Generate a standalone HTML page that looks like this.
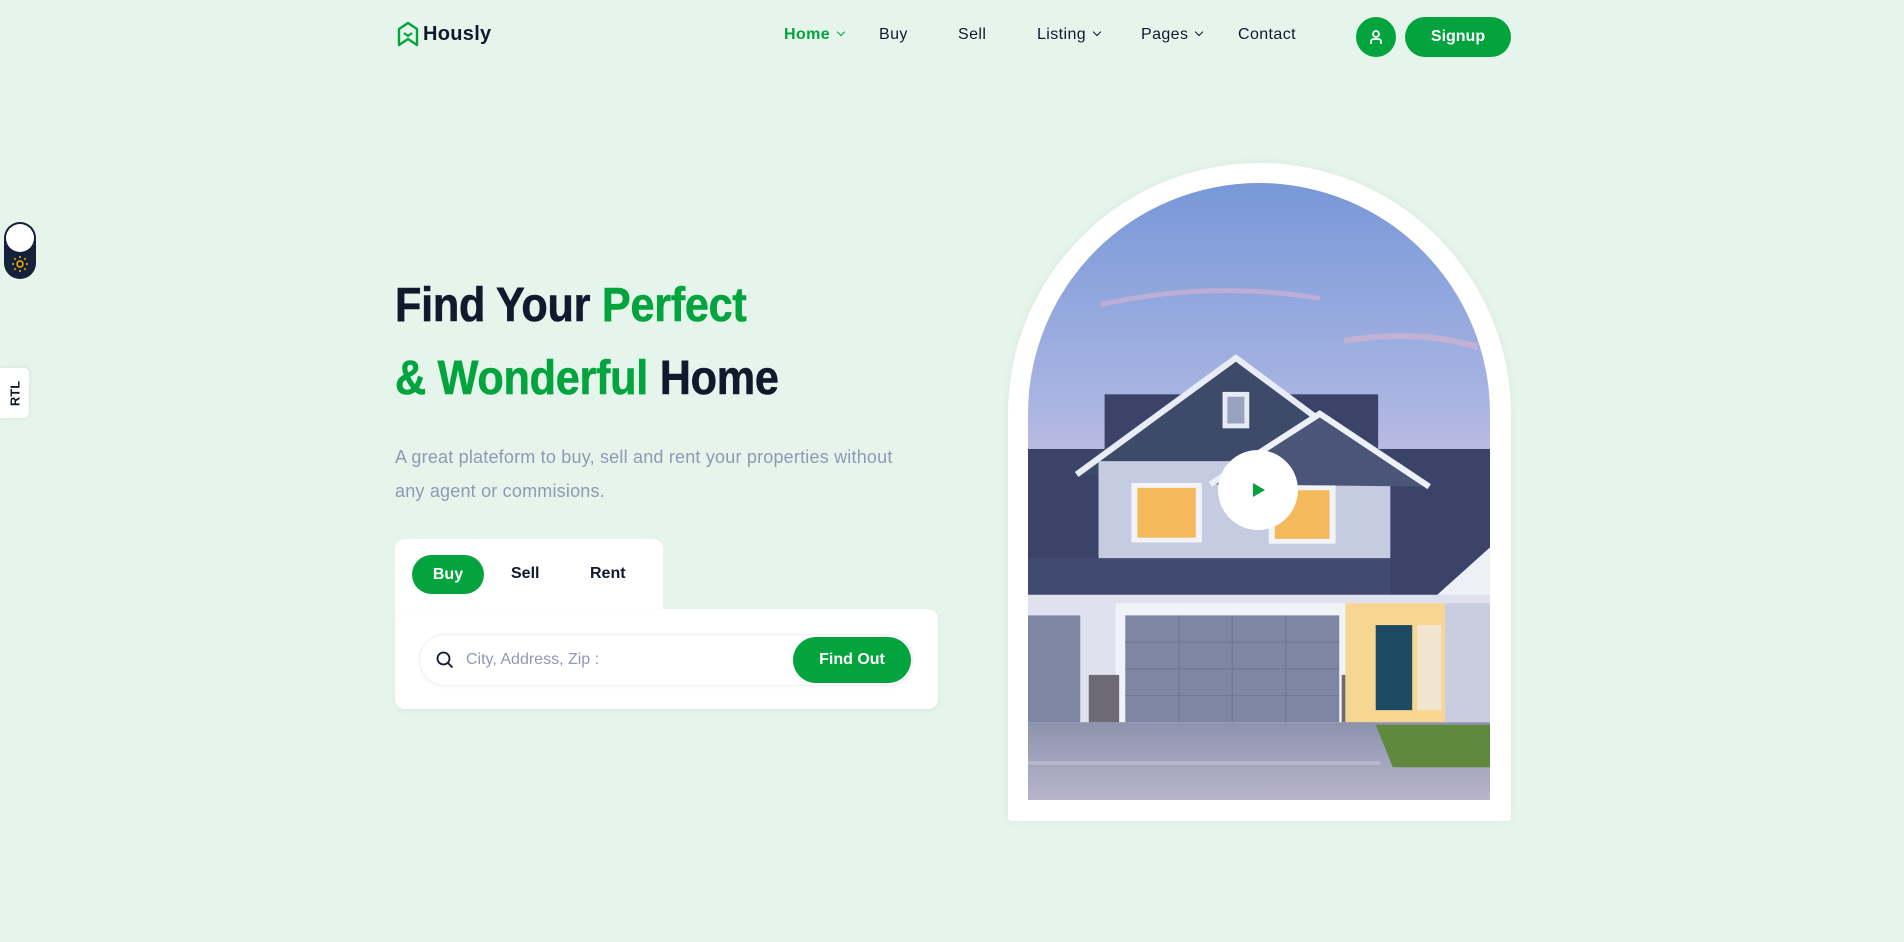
<!DOCTYPE html>
<html><head><meta charset="utf-8"><style>
*{margin:0;padding:0;box-sizing:border-box}
body{width:1904px;height:942px;background:#e5f5ec;font-family:"Liberation Sans",sans-serif;position:relative;overflow:hidden;color:#0f1a2e}
.abs{position:absolute}
.nav a{position:absolute;top:26px;font-size:16px;color:#0f1a2e;text-decoration:none;letter-spacing:.4px}
.chev{display:inline-block;width:6px;height:6px;border-right:1.6px solid currentColor;border-bottom:1.6px solid currentColor;transform:rotate(45deg);margin-left:8px;position:relative;top:-4px}
h1{position:absolute;left:395px;font-size:48px;font-weight:700;transform:scaleX(.9);transform-origin:left;white-space:nowrap;letter-spacing:-.3px;-webkit-text-stroke:.6px currentColor}
.g{color:#03a43d}
</style></head><body>
<svg class="abs" style="left:397px;top:21px" width="22" height="26" viewBox="0 0 22 26"><path d="M11 2 L20 8 V24 L11 18 L2 24 V8 Z" fill="none" stroke="#03a43d" stroke-width="2.4" stroke-linejoin="round"/><path d="M7 12 L11 15 L15 12" fill="none" stroke="#03a43d" stroke-width="2.2"/></svg>
<div class="abs" style="left:423px;top:23px;font-size:20px;font-weight:700;letter-spacing:.3px">Hously</div>
<div class="nav">
<a style="left:784px;color:#03a43d;font-weight:700">Home<span class="chev"></span></a>
<a style="left:879px">Buy</a>
<a style="left:958px">Sell</a>
<a style="left:1037px">Listing<span class="chev"></span></a>
<a style="left:1141px">Pages<span class="chev"></span></a>
<a style="left:1238px">Contact</a>
</div>
<div class="abs" style="left:1356px;top:17px;width:40px;height:40px;border-radius:50%;background:#03a43d"></div>
<svg class="abs" style="left:1369px;top:29px" width="14" height="16" viewBox="0 0 14 16"><circle cx="7" cy="5" r="3" fill="none" stroke="#fff" stroke-width="1.8"/><path d="M2 15 V13 Q2 10 5 10 H9 Q12 10 12 13 V15" fill="none" stroke="#fff" stroke-width="1.8"/></svg>
<div class="abs" style="left:1405px;top:17px;width:106px;height:40px;border-radius:20px;background:#03a43d;color:#fff;font-weight:700;font-size:16px;text-align:center;line-height:40px">Signup</div>

<div class="abs" style="left:4px;top:222px;width:32px;height:57px;border-radius:16px;background:#15203a"></div>
<div class="abs" style="left:6px;top:224px;width:28px;height:28px;border-radius:50%;background:#fff"></div>
<svg class="abs" style="left:12px;top:256px" width="16" height="16" viewBox="0 0 16 16"><circle cx="8" cy="8" r="3" fill="none" stroke="#f5b400" stroke-width="1.5"/><g stroke="#f5b400" stroke-width="1.5"><path d="M8 0v2M8 14v2M0 8h2M14 8h2M2.3 2.3l1.4 1.4M12.3 12.3l1.4 1.4M2.3 13.7l1.4-1.4M12.3 3.7l1.4-1.4"/></g></svg>
<div class="abs" style="left:0;top:368px;width:29px;height:50px;background:#fff;border-radius:0 6px 6px 0;box-shadow:0 0 6px rgba(0,0,0,.08)"></div>
<div class="abs" style="left:1px;top:386px;font-size:13px;font-weight:700;transform:rotate(-90deg);transform-origin:center;width:28px;text-align:center">RTL</div>

<h1 style="top:278px">Find Your <span class="g">Perfect</span></h1>
<h1 style="top:351px"><span class="g">&amp; Wonderful</span> Home</h1>
<div class="abs" style="left:395px;top:440px;font-size:18px;line-height:34px;color:#8e9ab3;width:600px;letter-spacing:.2px">A great plateform to buy, sell and rent your properties without<br>any agent or commisions.</div>

<div class="abs" style="left:395px;top:539px;width:268px;height:80px;background:#fff;border-radius:10px 10px 0 0"></div>
<div class="abs" style="left:395px;top:609px;width:543px;height:100px;background:#fff;border-radius:0 10px 10px 10px;box-shadow:0 2px 6px rgba(0,0,0,.05)"></div>
<div class="abs" style="left:412px;top:555px;width:72px;height:39px;border-radius:20px;background:#03a43d;color:#fff;font-weight:700;font-size:16px;text-align:center;line-height:39px">Buy</div>
<div class="abs" style="left:511px;top:565px;font-size:16px;font-weight:700">Sell</div>
<div class="abs" style="left:590px;top:565px;font-size:16px;font-weight:700">Rent</div>
<div class="abs" style="left:419px;top:634px;width:494px;height:52px;border-radius:26px;border:1px solid #eef0f4;box-shadow:0 1px 4px rgba(0,0,0,.04)"></div>
<svg class="abs" style="left:436px;top:651px" width="18" height="18" viewBox="0 0 18 18"><circle cx="7.5" cy="7.5" r="6" fill="none" stroke="#0f1a2e" stroke-width="1.8"/><path d="M12 12l4.5 4.5" stroke="#0f1a2e" stroke-width="1.8"/></svg>
<div class="abs" style="left:466px;top:651px;font-size:16px;color:#8e9ab3">City, Address, Zip :</div>
<div class="abs" style="left:793px;top:637px;width:118px;height:46px;border-radius:23px;background:#03a43d;color:#fff;font-weight:700;font-size:16px;text-align:center;line-height:46px">Find Out</div>

<div class="abs" style="left:1008px;top:163px;width:503px;height:658px;background:#fff;border-radius:252px 252px 4px 4px;box-shadow:0 0 10px rgba(0,0,0,.05)"></div>
<div class="abs" style="left:1028px;top:183px;width:462px;height:617px;border-radius:231px 231px 0 0;overflow:hidden">
<svg width="462" height="617" viewBox="0 0 380 508" preserveAspectRatio="none">
<defs><linearGradient id="sky" x1="0" y1="0" x2="0" y2="1"><stop offset="0" stop-color="#7898d8"/><stop offset=".35" stop-color="#a8b4e2"/><stop offset=".6" stop-color="#dcc7e0"/><stop offset="1" stop-color="#e9dbe8"/></linearGradient>
<linearGradient id="drv" x1="0" y1="0" x2="0" y2="1"><stop offset="0" stop-color="#8d93ad"/><stop offset="1" stop-color="#b8b4cc"/></linearGradient></defs>
<rect width="380" height="508" fill="url(#sky)"/>
<path d="M60 100 Q150 80 240 95" stroke="#e7b6d2" stroke-width="4" fill="none" opacity=".5"/>
<path d="M260 130 Q320 120 370 135" stroke="#e8b6cc" stroke-width="5" fill="none" opacity=".5"/>
<rect x="0" y="219" width="380" height="121" fill="#3b4468"/>
<rect x="63" y="174" width="225" height="50" fill="#3b4468"/>
<path d="M40 240 L171 144 L300 240 Z" fill="#3d4a6a"/>
<path d="M40 240 L171 144 L300 240" fill="none" stroke="#e8ecf6" stroke-width="5"/>
<rect x="160" y="172" width="22" height="30" fill="#e6eaf4"/><rect x="164" y="176" width="14" height="22" fill="#9aa3bd"/>
<rect x="58" y="229" width="240" height="80" fill="#c5cbe0"/>
<path d="M150 248 L240 190 L330 250" fill="#4a5577" stroke="#eef0f8" stroke-width="5"/>
<rect x="85" y="247" width="58" height="49" fill="#f3f4fa"/><rect x="90" y="251" width="48" height="41" fill="#f4b95a"/>
<rect x="198" y="249" width="55" height="48" fill="#f3f4fa"/><rect x="203" y="253" width="45" height="40" fill="#f4b95a"/>
<path d="M0 309 H298 L298 339 H0 Z" fill="#414a70"/>
<path d="M330 345 L380 300 V345 Z" fill="#eef0f8"/>
<rect x="0" y="339" width="380" height="110" fill="#dfe2ee"/>
<rect x="0" y="356" width="43" height="88" fill="#7d86a3"/>
<rect x="72" y="346" width="192" height="98" fill="#f2f3f8"/>
<rect x="80" y="356" width="176" height="88" fill="#7d86a3"/>
<g stroke="#6f7894" stroke-width="1"><path d="M80 378H256M80 400H256M80 422H256M124 356V444M168 356V444M212 356V444"/></g>
<rect x="50" y="405" width="25" height="39" fill="#6d6a76"/><rect x="258" y="405" width="28" height="39" fill="#6d6a76"/>
<rect x="261" y="346" width="82" height="98" fill="#f6d690"/>
<rect x="286" y="364" width="30" height="70" fill="#1d4a63"/>
<rect x="320" y="364" width="20" height="70" fill="#f2e5d0"/>
<rect x="343" y="346" width="37" height="98" fill="#c8cde0"/>
<rect x="0" y="444" width="380" height="64" fill="url(#drv)"/>
<path d="M286 446 H380 V481 H300 Z" fill="#5f8a3e"/>
<rect x="0" y="476" width="290" height="3" fill="#c7c5d8" opacity=".6"/>
</svg>
</div>
<div class="abs" style="left:1218px;top:450px;width:80px;height:80px;border-radius:50%;background:#fff"></div>
<svg class="abs" style="left:1252px;top:483px" width="14" height="14" viewBox="0 0 14 14"><path d="M1 0 L13 7 L1 14 Z" fill="#03a43d"/></svg>
</body></html>
